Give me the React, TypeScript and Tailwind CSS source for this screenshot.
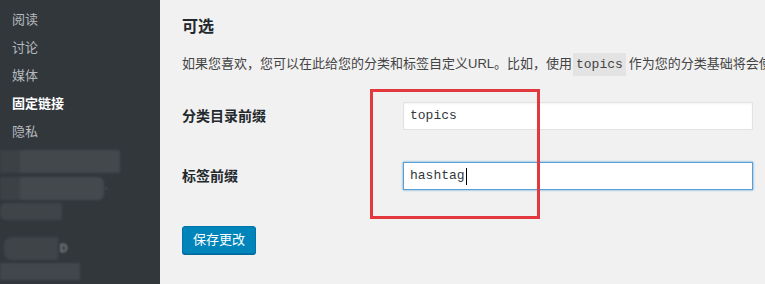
const menu = [
  { label: '阅读' },
  { label: '讨论' },
  { label: '媒体' },
  { label: '固定链接', active: true },
  { label: '隐私' },
];

const sans = 'font-["Liberation_Sans","Noto_Sans_CJK_SC",sans-serif]';

function Sidebar() {
  return (
    <aside className="w-[160px] shrink-0 bg-[#32373c] pt-[6px]">
      {menu.map((item) => (
        <div
          key={item.label}
          className={
            'h-[28px] pl-[12px] text-[13px] leading-[28px] ' +
            (item.active ? 'font-bold text-white' : 'text-[#b4b9be]')
          }
        >
          {item.label}
        </div>
      ))}
      {/* blurred-out plugin menu entries */}
      <div className="mt-[4px] flex h-[23px] w-[120px] blur-[1px]">
        <div className="w-[20px] bg-[#3c4146]" />
        <div className="flex-1 bg-[#43484d]" />
      </div>
      <div className="mt-[4px] flex h-[23px] w-[108px] items-center blur-[1px]">
        <div className="h-full w-[20px] bg-[#3c4146]" />
        <div className="h-full flex-1 rounded-r-[6px] bg-[#44494e]" />
        <span className="ml-[1px] text-[9px] text-[#9aa0a5]">·</span>
      </div>
      <div className="mt-[3px] flex h-[17px] w-[62px] items-end blur-[1px]">
        <div className="h-full flex-1 rounded-l-[6px] bg-[#3f4449]" />
      </div>
      <div className="mt-[17px] flex h-[23px] w-[70px] items-center blur-[1px]">
        <div className="ml-[4px] h-full w-[54px] rounded-l-[8px] bg-[#3f4449]" />
        <span className="ml-[2px] text-[10px] text-[#b4b9be]">D</span>
      </div>
      <div className="mt-[3px] h-[17px] w-[80px] bg-[#42474c] blur-[1px]" />
    </aside>
  );
}

function Field({
  label,
  value,
  focused,
}: {
  label: string;
  value: string;
  focused?: boolean;
}) {
  return (
    <div className="flex items-center">
      <div className="w-[221px] text-[14px] font-bold text-[#23282d]">{label}</div>
      <div
        className={
          'flex h-[28px] w-[350px] items-center bg-white pl-[6px] font-["Liberation_Mono",monospace] text-[13px] text-[#32373c] ' +
          (focused
            ? 'border border-[#5b9dd9] shadow-[0_0_2px_rgba(30,140,190,0.8)]'
            : 'border border-[#e2e2e2] shadow-[inset_0_1px_2px_rgba(0,0,0,0.05)]')
        }
      >
        {value}
        {focused && <span className="ml-[1px] h-[17px] w-px bg-black" />}
      </div>
    </div>
  );
}

export default function App() {
  return (
    <div className={'relative flex h-[284px] w-[765px] overflow-hidden ' + sans}>
      <Sidebar />
      <main className="flex-1 overflow-hidden bg-[#f1f1f1] pl-[22px] pt-[16px]">
        <h2 className="text-[16px] font-bold leading-[22px] text-[#23282d]">可选</h2>
        <p className="mt-[14px] whitespace-nowrap text-[13px] leading-[24px] text-[#444]">
          如果您喜欢，您可以在此给您的分类和标签自定义URL。比如，使用
          <code className="ml-[1px] mr-[3px] bg-[#e3e3e3] px-[3px] py-[4px] font-['Liberation_Mono',monospace] text-[13px]">
            topics
          </code>
          作为您的分类基础将会使
        </p>
        <div className="mt-[25px]">
          <Field label="分类目录前缀" value="topics" />
        </div>
        <div className="mt-[32px]">
          <Field label="标签前缀" value="hashtag" focused />
        </div>
        <button className="mt-[36px] h-[28px] w-[74px] rounded-[3px] border border-[#0073aa] bg-[#0085ba] text-[13px] text-white shadow-[0_1px_0_#006799]">
          保存更改
        </button>
      </main>
      {/* red highlight frame drawn over the screenshot */}
      <div className="pointer-events-none absolute left-[370px] top-[89px] h-[130px] w-[170px] border-[3px] border-[#e3393e]" />
    </div>
  );
}
